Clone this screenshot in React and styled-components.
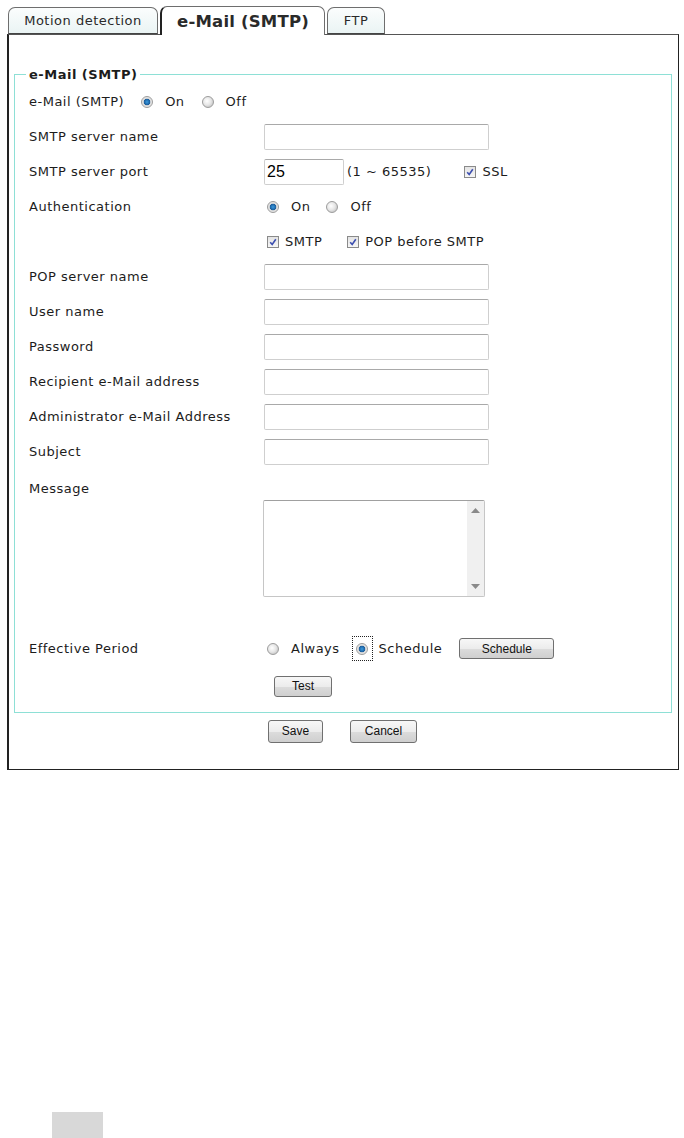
import React from 'react';
import styled, { createGlobalStyle } from 'styled-components';

const GlobalStyle = createGlobalStyle`
  body {
    margin: 0;
    background: #fff;
    font-family: "DejaVu Sans", Verdana, sans-serif;
    font-size: 13px;
    letter-spacing: 0.5px;
    color: #1c1c1c;
  }
`;

const Page = styled.div`
  padding: 5px 0 0 7px;
  width: 672px;
  height: 1133px;
  display: flex;
  flex-direction: column;
`;

const TabBar = styled.div`
  display: flex;
  align-items: flex-end;
  gap: 2px;
  padding-left: 1px;
  height: 29px;
  position: relative;
  z-index: 1;
`;

const Tab = styled.div`
  box-sizing: border-box;
  width: ${(p) => p.$w}px;
  height: ${(p) => (p.$active ? 29 : 27)}px;
  margin-bottom: ${(p) => (p.$active ? -1 : 0)}px;
  border: 1px solid #6e6e6e;
  border-left: ${(p) => (p.$active ? '2px solid #222' : '1px solid #6e6e6e')};
  border-bottom: ${(p) => (p.$active ? 'none' : '1px solid #444')};
  border-radius: 7px 7px 0 0;
  background: ${(p) => (p.$active ? '#fff' : 'linear-gradient(#fbfdfd, #eaf4f4)')};
  display: flex;
  align-items: center;
  justify-content: center;
  font-size: ${(p) => (p.$active ? '16.5px' : '13px')};
  font-weight: ${(p) => (p.$active ? 'bold' : 'normal')};
  letter-spacing: ${(p) => (p.$active ? '0.2px' : '0.5px')};
  color: #2a2a2a;
  padding-top: ${(p) => (p.$active ? 1 : 0)}px;
`;

const Panel = styled.div`
  box-sizing: border-box;
  width: 672px;
  height: 736px;
  border: 1px solid #222;
  border-top-color: #555;
  border-left: 2px solid #222;
  padding: 32px 6px 0 5px;
`;

const FieldSet = styled.fieldset`
  margin: 0;
  padding: 2px 14px 0 14px;
  border: 1px solid #8ee0d6;
  height: 646px;
  box-sizing: border-box;
`;

const Legend = styled.legend`
  font-weight: bold;
  font-size: 13px;
  padding: 0 3px;
  margin-left: -3px;
  line-height: 15px;
`;

const Row = styled.div`
  display: grid;
  grid-template-columns: ${(p) => (p.$inline ? 'auto 1fr' : '235px 1fr')};
  column-gap: ${(p) => (p.$inline ? 17 : 0)}px;
  align-items: center;
  height: ${(p) => p.$h || 35}px;
`;

const MessageRow = styled.div`
  box-sizing: border-box;
  height: 31px;
  padding-top: 12px;
  line-height: 15px;
`;

const Label = styled.span`
  white-space: nowrap;
`;

const Controls = styled.div`
  display: flex;
  align-items: center;
  white-space: nowrap;
  padding-left: ${(p) => p.$pad || 0}px;
`;

const TextInput = styled.div`
  box-sizing: border-box;
  flex-shrink: 0;
  width: ${(p) => p.$w || 225}px;
  height: 26px;
  border: 1px solid #cfcfcf;
  border-top-color: #a9a9a9;
  border-radius: 2px;
  background: #fff;
  font-family: "Liberation Sans", Arial, sans-serif;
  font-size: 16px;
  letter-spacing: 0;
  line-height: 24px;
  padding-left: 2px;
  color: #000;
`;

const Hint = styled.span`
  margin-left: 3px;
  margin-right: 33px;
`;

const Option = styled.label`
  display: inline-flex;
  align-items: center;
  margin-right: ${(p) => p.$mr || 0}px;
`;

const RadioDot = styled.span`
  box-sizing: border-box;
  flex-shrink: 0;
  width: 12px;
  height: 12px;
  border-radius: 50%;
  border: 1px solid #9c9c9c;
  background: ${(p) =>
    p.$on
      ? 'radial-gradient(circle at 50% 50%, #3a9be0 0, #1b5d9c 3px, #d8d8d8 3.6px, #f4f4f4 6px)'
      : 'radial-gradient(circle at 40% 40%, #ffffff 0, #e6e6e6 4px, #cfcfcf 6px)'};
  margin-right: ${(p) => p.$gap ?? 12}px;
`;

const Focus = styled.span`
  display: inline-flex;
  align-items: center;
  justify-content: center;
  flex-shrink: 0;
  width: 21px;
  height: 25px;
  box-sizing: border-box;
  border: 1px dotted #222;
  margin-right: 6px;
`;

const Box = styled.span`
  box-sizing: border-box;
  flex-shrink: 0;
  width: 12px;
  height: 12px;
  border: 1px solid #8a8a8a;
  background: linear-gradient(#e4e4e4, #f6f6f6);
  display: inline-flex;
  align-items: center;
  justify-content: center;
  margin-right: ${(p) => p.$gap || 6}px;
`;

const TextArea = styled.div`
  box-sizing: border-box;
  width: 222px;
  height: 97px;
  margin-left: 234px;
  border: 1px solid #c6c6c6;
  border-top-color: #a0a0a0;
  border-radius: 2px;
  display: flex;
  justify-content: flex-end;
`;

const ScrollBar = styled.div`
  width: 17px;
  background: #f0f0f0;
  display: flex;
  flex-direction: column;
  justify-content: space-between;
  align-items: center;
  padding: 7px 0;
`;

const Button = styled.button`
  box-sizing: border-box;
  flex-shrink: 0;
  width: ${(p) => p.$w}px;
  height: ${(p) => p.$h || 21}px;
  border: 1px solid #707070;
  border-radius: 3px;
  background: linear-gradient(#f7f7f7, #ececec 50%, #dcdcdc 51%, #cfcfcf);
  font-family: "Liberation Sans", Arial, sans-serif;
  font-size: 12px;
  letter-spacing: 0;
  color: #111;
  padding: 0;
  margin-left: ${(p) => p.$ml || 0}px;
`;

const Spacer = styled.div`
  height: ${(p) => p.$h}px;
`;

const ButtonRow = styled.div`
  display: flex;
  align-items: center;
  height: ${(p) => p.$h}px;
  padding-left: ${(p) => p.$pad}px;
`;

const Footer = styled.div`
  margin-top: auto;
  margin-left: 45px;
  width: 51px;
  height: 26px;
  background: #d8d8d8;
`;

function Radio({ on, label, mr, gap }) {
  return (
    <Option $mr={mr}>
      <RadioDot $on={on} $gap={gap} />
      {label}
    </Option>
  );
}

function Check({ label, mr }) {
  return (
    <Option $mr={mr}>
      <Box>
        <svg width="8" height="8" viewBox="0 0 8 8">
          <path d="M1.2 4.2 L3.2 6.5 L6.8 1.2" stroke="#3d4fb0" strokeWidth="1.6" fill="none" />
        </svg>
      </Box>
      {label}
    </Option>
  );
}

function Field({ label }) {
  return (
    <Row>
      <Label>{label}</Label>
      <Controls>
        <TextInput />
      </Controls>
    </Row>
  );
}

export default function App() {
  return (
    <>
      <GlobalStyle />
      <Page>
        <TabBar>
          <Tab $w={150}>Motion detection</Tab>
          <Tab $w={165} $active>e-Mail (SMTP)</Tab>
          <Tab $w={58}>FTP</Tab>
        </TabBar>
        <Panel>
          <FieldSet>
            <Legend>e-Mail (SMTP)</Legend>
            <Row $inline>
              <Label>e-Mail (SMTP)</Label>
              <Controls>
                <Radio on label="On" mr={17} />
                <Radio label="Off" />
              </Controls>
            </Row>
            <Field label="SMTP server name" />
            <Row>
              <Label>SMTP server port</Label>
              <Controls>
                <TextInput $w={80}>25</TextInput>
                <Hint>(1 ~ 65535)</Hint>
                <Check label="SSL" />
              </Controls>
            </Row>
            <Row>
              <Label>Authentication</Label>
              <Controls $pad={3}>
                <Radio on label="On" mr={16} />
                <Radio label="Off" />
              </Controls>
            </Row>
            <Row>
              <span />
              <Controls $pad={3}>
                <Check label="SMTP" mr={25} />
                <Check label="POP before SMTP" />
              </Controls>
            </Row>
            <Field label="POP server name" />
            <Field label="User name" />
            <Field label="Password" />
            <Field label="Recipient e-Mail address" />
            <Field label="Administrator e-Mail Address" />
            <Field label="Subject" />
            <MessageRow>Message</MessageRow>
            <TextArea>
              <ScrollBar>
                <svg width="9" height="5" viewBox="0 0 9 5"><path d="M0 5 L4.5 0 L9 5 Z" fill="#8a8a8a" /></svg>
                <svg width="9" height="5" viewBox="0 0 9 5"><path d="M0 0 L4.5 5 L9 0 Z" fill="#8a8a8a" /></svg>
              </ScrollBar>
            </TextArea>
            <Spacer $h={34} />
            <Row>
              <Label>Effective Period</Label>
              <Controls $pad={3}>
                <Radio label="Always" mr={12} />
                <Focus>
                  <RadioDot $on $gap={0} />
                </Focus>
                Schedule
                <Button $w={95} $ml={17}>Schedule</Button>
              </Controls>
            </Row>
            <ButtonRow $h={40} $pad={245}>
              <Button $w={58} $h={21}>Test</Button>
            </ButtonRow>
          </FieldSet>
          <ButtonRow $h={36} $pad={254}>
            <Button $w={55} $h={23}>Save</Button>
            <Button $w={67} $h={23} $ml={27}>Cancel</Button>
          </ButtonRow>
        </Panel>
        <Footer />
      </Page>
    </>
  );
}
